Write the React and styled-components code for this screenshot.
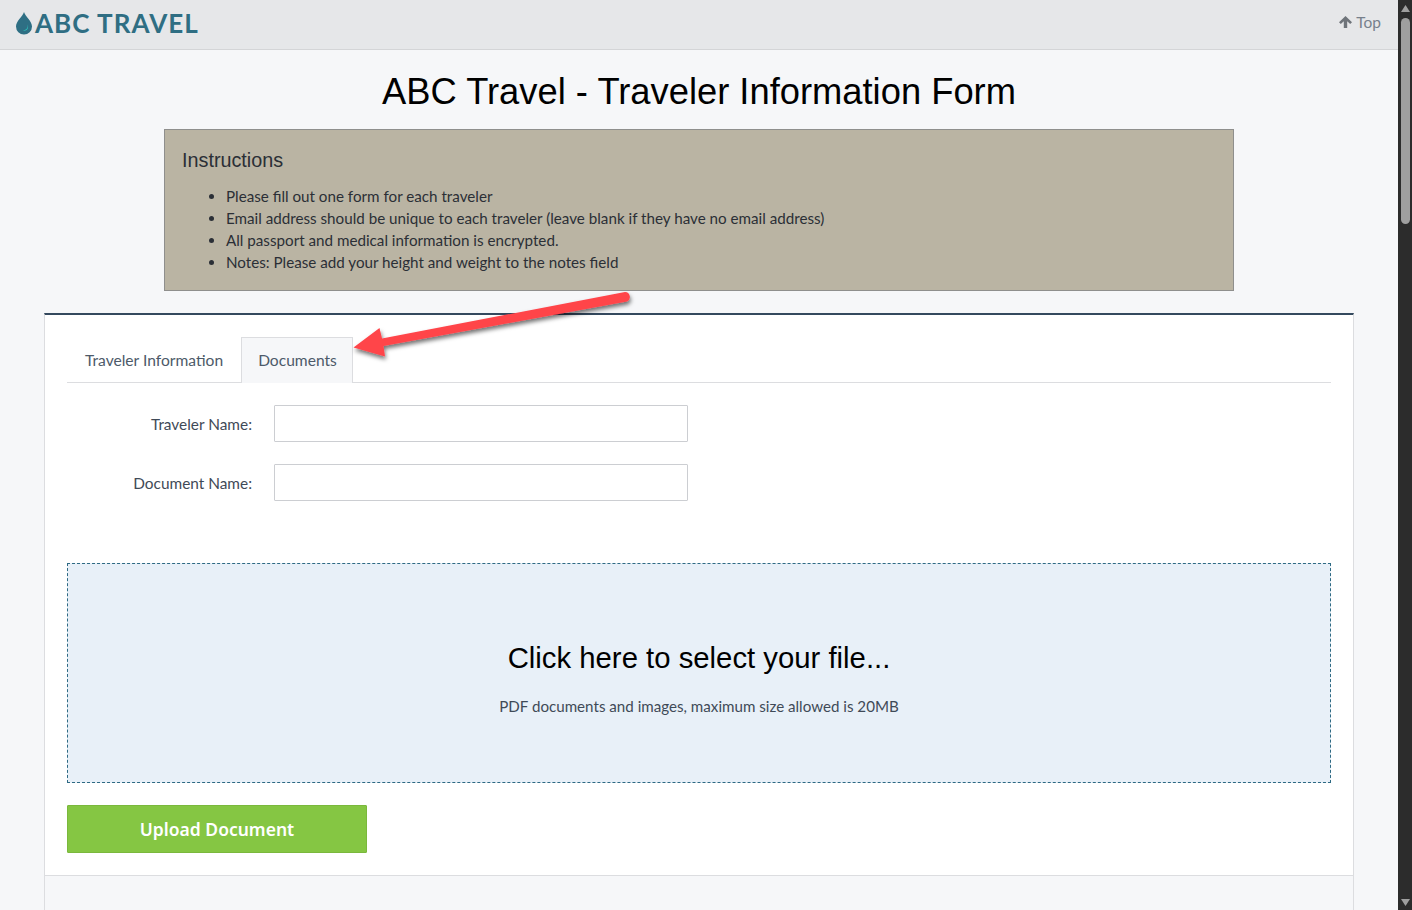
import React from "react";
import styled, { createGlobalStyle } from "styled-components";

const GlobalStyle = createGlobalStyle`
  html, body {
    margin: 0;
    padding: 0;
    height: 100%;
    overflow: hidden;
  }
  body {
    background: #f6f7f9;
    font-family: Lato, "Liberation Sans", sans-serif;
    color: #3c4654;
  }
  * { box-sizing: border-box; }
`;

const Screen = styled.div`
  display: flex;
  width: 1412px;
  height: 910px;
  overflow: hidden;
`;

const Page = styled.div`
  position: relative;
  flex: 1;
  min-width: 0;
`;

const TopBar = styled.header`
  display: flex;
  align-items: center;
  justify-content: space-between;
  height: 50px;
  padding: 0 17px 4px 15px;
  background: #e6e7e9;
  border-bottom: 1px solid #d4d5d7;
`;

const Logo = styled.div`
  display: flex;
  align-items: center;
  gap: 2px;
  font-family: Lato, sans-serif;
  font-size: 26px;
  font-weight: 700;
  color: #2f6e83;
  letter-spacing: 1.05px;
`;

const TopLink = styled.a`
  display: flex;
  align-items: center;
  gap: 4px;
  margin-bottom: 2px;
  font-size: 15.5px;
  color: #77808c;
`;

const Title = styled.h1`
  margin: 20px 0 15px;
  font-family: "Liberation Sans", Arial, sans-serif;
  font-size: 36.35px;
  line-height: 44px;
  font-weight: 400;
  text-align: center;
  color: #000;
`;

const Instructions = styled.section`
  width: 1070px;
  height: 162px;
  margin: 0 0 22px 164px;
  padding: 17px 17px;
  background: #bab4a3;
  border: 1px solid #8f8f8d;
  color: #2b2f36;
`;

const InstructionsTitle = styled.h2`
  margin: 0 0 12px;
  font-family: "Liberation Sans", Arial, sans-serif;
  font-size: 19.8px;
  line-height: 26px;
  font-weight: 400;
`;

const InstructionsList = styled.ul`
  margin: 0;
  padding: 0 0 0 44px;
  font-size: 15.2px;
  line-height: 22px;
`;

const Card = styled.main`
  width: 1310px;
  height: 620px;
  margin-left: 44px;
  background: #f6f7f9;
  border: 1px solid #dcdde0;
  border-top: 2px solid #34495e;
`;

const CardBody = styled.div`
  height: 561px;
  padding: 22px 22px 0;
  background: #fff;
  border-bottom: 1px solid #dcdde0;
`;

const Tabs = styled.nav`
  display: flex;
  gap: 1px;
  height: 46px;
  border-bottom: 1px solid #dcdde0;
`;

const Tab = styled.div`
  display: flex;
  align-items: center;
  justify-content: center;
  height: 46px;
  padding: ${(p) => (p.$active ? "0 15px 2px 16px" : "0 16px 2px 17px")};
  font-size: 15.6px;
  color: #4d5a69;
  background: ${(p) => (p.$active ? "#f6f7f9" : "transparent")};
  border: 1px solid ${(p) => (p.$active ? "#dcdde0" : "transparent")};
  border-bottom: none;
`;

const Form = styled.form`
  display: flex;
  flex-direction: column;
  gap: 22px;
  padding-top: 22px;
`;

const Row = styled.div`
  display: flex;
  align-items: center;
`;

const Label = styled.label`
  width: 185px;
  margin-right: 22px;
  text-align: right;
  font-size: 15.4px;
  line-height: 20px;
  color: #3f4a57;
`;

const Input = styled.input`
  width: 414px;
  height: 37px;
  background: #fff;
  border: 1px solid #ccced2;
  border-radius: 1px;
`;

const DropZone = styled.div`
  display: flex;
  flex-direction: column;
  align-items: center;
  height: 220px;
  margin-top: 62px;
  padding-top: 76px;
  background: #e8f0f8;
  border: 1px dashed #2e6a84;
`;

const DropTitle = styled.div`
  font-family: "Liberation Sans", Arial, sans-serif;
  font-size: 29.3px;
  line-height: 36px;
  color: #000;
`;

const DropHint = styled.div`
  margin-top: 20px;
  font-size: 15.15px;
  line-height: 20px;
  color: #3f4a57;
`;

const UploadButton = styled.button`
  display: block;
  width: 300px;
  height: 48px;
  margin-top: 22px;
  padding: 0;
  font-family: "Noto Sans", "Open Sans", sans-serif;
  font-size: 17.5px;
  font-weight: 600;
  color: #fff;
  background: #85c643;
  border: 1px solid #7ab83c;
  border-radius: 1px;
`;

const ArrowOverlay = styled.svg`
  position: absolute;
  left: 340px;
  top: 280px;
  width: 300px;
  height: 90px;
  overflow: visible;
`;

const ScrollBar = styled.div`
  display: flex;
  flex-direction: column;
  align-items: center;
  width: 14px;
  height: 100%;
  background: #2c2c2c;
`;

const ScrollThumb = styled.div`
  width: 9px;
  height: 206px;
  margin: 3px 0 0 1px;
  background: #9f9f9f;
  border-radius: 5px;
`;

const ScrollButton = styled.svg`
  flex: none;
  width: 14px;
  height: 15px;
  margin-top: ${(p) => (p.$down ? "auto" : "0")};
`;

const DropIcon = () => (
  <svg width="18" height="24" viewBox="0 0 18 24">
    <path d="M9 1 C10 5 17 10 17 15.5 A8 8 0 0 1 1 15.5 C1 10 8 5 9 1 Z" fill="#2e6f84" />
    <path d="M12.5 13 C13.5 16.5 11.5 19 8 19.5 C11 20.5 14.5 18 12.5 13 Z" fill="#2fc3bb" />
  </svg>
);

const UpArrowIcon = () => (
  <svg width="13" height="12" viewBox="0 0 13 12">
    <path d="M6.5 0 L13 6.2 L11.2 8 L8.2 5.2 V12 H4.8 V5.2 L1.8 8 L0 6.2 Z" fill="#6f747a" />
  </svg>
);

const Arrow = () => (
  <ArrowOverlay viewBox="0 0 300 90">
    <defs>
      <filter id="arrowShadow" x="-10%" y="-30%" width="120%" height="170%">
        <feDropShadow dx="1" dy="3" stdDeviation="2" floodColor="#000" floodOpacity="0.55" />
      </filter>
    </defs>
    <path
      filter="url(#arrowShadow)"
      fill="#ff444a"
      d="M13.5 67.5 L39.5 48 L42 58.5 L285 12 A5 5 0 0 1 287 21.5 L43.5 66 L45 76.5 Z"
    />
  </ArrowOverlay>
);

export default function App() {
  return (
    <Screen>
      <GlobalStyle />
      <Page>
        <TopBar>
          <Logo>
            <DropIcon />
            ABC TRAVEL
          </Logo>
          <TopLink>
            <UpArrowIcon />
            Top
          </TopLink>
        </TopBar>
        <Title>ABC Travel - Traveler Information Form</Title>
        <Instructions>
          <InstructionsTitle>Instructions</InstructionsTitle>
          <InstructionsList>
            <li>Please fill out one form for each traveler</li>
            <li>Email address should be unique to each traveler (leave blank if they have no email address)</li>
            <li>All passport and medical information is encrypted.</li>
            <li>Notes: Please add your height and weight to the notes field</li>
          </InstructionsList>
        </Instructions>
        <Card>
          <CardBody>
            <Tabs>
              <Tab>Traveler Information</Tab>
              <Tab $active>Documents</Tab>
            </Tabs>
            <Form>
              <Row>
                <Label>Traveler Name:</Label>
                <Input />
              </Row>
              <Row>
                <Label>Document Name:</Label>
                <Input />
              </Row>
            </Form>
            <DropZone>
              <DropTitle>Click here to select your file...</DropTitle>
              <DropHint>PDF documents and images, maximum size allowed is 20MB</DropHint>
            </DropZone>
            <UploadButton type="button">Upload Document</UploadButton>
          </CardBody>
        </Card>
        <Arrow />
      </Page>
      <ScrollBar>
        <ScrollButton viewBox="0 0 14 15">
          <path d="M7.5 5 L12 12 H3 Z" fill="#9f9f9f" />
        </ScrollButton>
        <ScrollThumb />
        <ScrollButton $down viewBox="0 0 14 15">
          <path d="M3 4 H12 L7.5 11 Z" fill="#9f9f9f" />
        </ScrollButton>
      </ScrollBar>
    </Screen>
  );
}
